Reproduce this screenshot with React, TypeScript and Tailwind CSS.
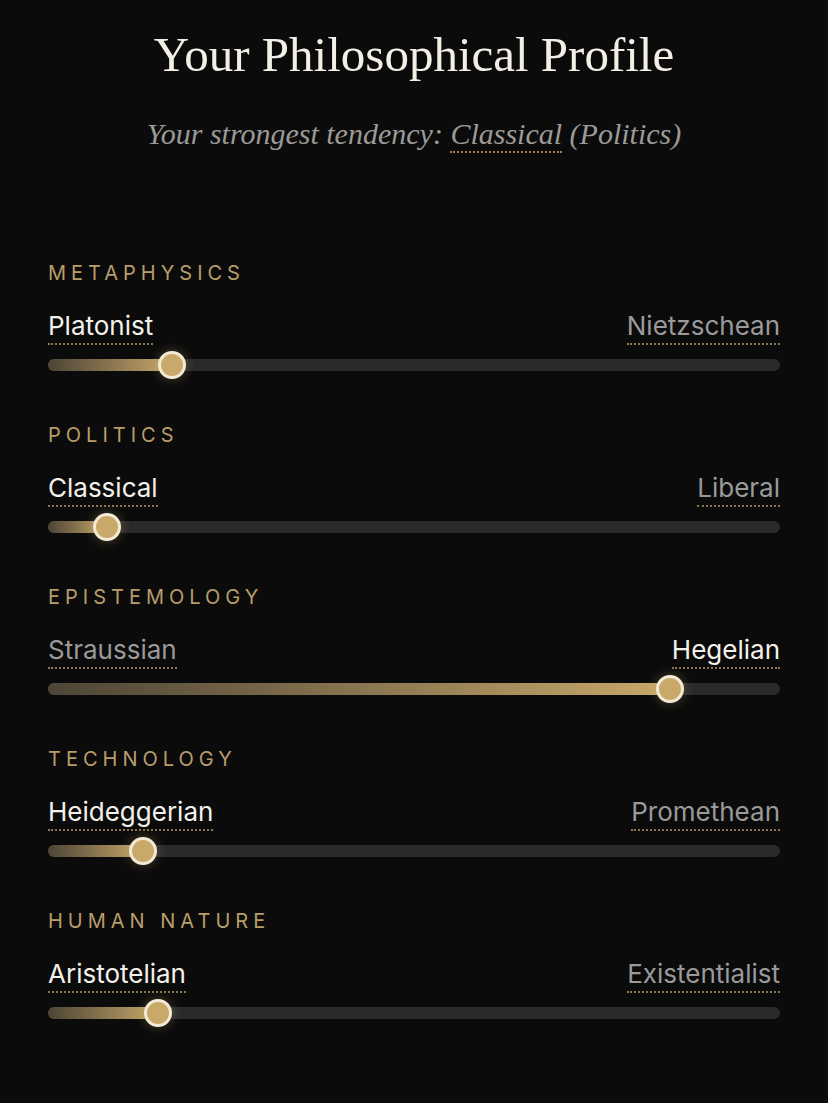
import React from "react";

type Row = { label: string; left: string; right: string; value: number; side: "left" | "right" };

const rows: Row[] = [
  { label: "METAPHYSICS", left: "Platonist", right: "Nietzschean", value: 17, side: "left" },
  { label: "POLITICS", left: "Classical", right: "Liberal", value: 8, side: "left" },
  { label: "EPISTEMOLOGY", left: "Straussian", right: "Hegelian", value: 85, side: "right" },
  { label: "TECHNOLOGY", left: "Heideggerian", right: "Promethean", value: 13, side: "left" },
  { label: "HUMAN NATURE", left: "Aristotelian", right: "Existentialist", value: 15, side: "left" },
];

function Name({ text, active }: { text: string; active: boolean }) {
  return (
    <span
      className={
        "border-b-2 border-dotted border-[#8a7650] pb-[2px] leading-[30px] " +
        (active ? "text-[#f4f1ea]" : "text-[#9a9a9a]")
      }
    >
      {text}
    </span>
  );
}

function Section({ row }: { row: Row }) {
  return (
    <div className="flex flex-col">
      <div className="text-[20px] tracking-[0.25em] text-[#b89d6a] leading-[24px]">{row.label}</div>
      <div className="mt-[26px] flex justify-between text-[26px]">
        <Name text={row.left} active={row.side === "left"} />
        <Name text={row.right} active={row.side === "right"} />
      </div>
      <div className="relative mt-[14px] h-[12px] rounded-full bg-[#2a2a2a]">
        <div
          className="absolute left-0 top-0 h-full rounded-full bg-gradient-to-r from-[#4d4536] to-[#c9a96a]"
          style={{ width: `${row.value}%` }}
        />
        <div
          className="absolute top-1/2 h-[28px] w-[28px] -translate-x-1/2 -translate-y-1/2 rounded-full border-[3px] border-[#f3ead6] bg-[#c9a96a] shadow-[0_0_12px_rgba(201,169,106,0.35)]"
          style={{ left: `${row.value}%` }}
        />
      </div>
    </div>
  );
}

export default function App() {
  return (
    <div
      className="min-h-[1103px] w-full bg-[#0b0b0b] px-[48px]"
      style={{ fontFamily: "Inter, 'Noto Sans', sans-serif" }}
    >
      <div className="flex flex-col items-center pt-[25px]">
        <h1 className="text-[49px] leading-[60px] text-[#f3efe6] [font-family:'Liberation_Serif',serif]">
          Your Philosophical Profile
        </h1>
        <p className="mt-[29px] text-[30px] italic leading-[40px] text-[#9c9a96] [font-family:'Liberation_Serif',serif]">
          Your strongest tendency:{" "}
          <span className="border-b-2 border-dotted border-[#a07f4e] pb-[1px]">Classical</span> (Politics)
        </p>
      </div>
      <div className="mt-[107px] flex flex-col gap-[52px]">
        {rows.map((r) => (
          <Section key={r.label} row={r} />
        ))}
      </div>
    </div>
  );
}
